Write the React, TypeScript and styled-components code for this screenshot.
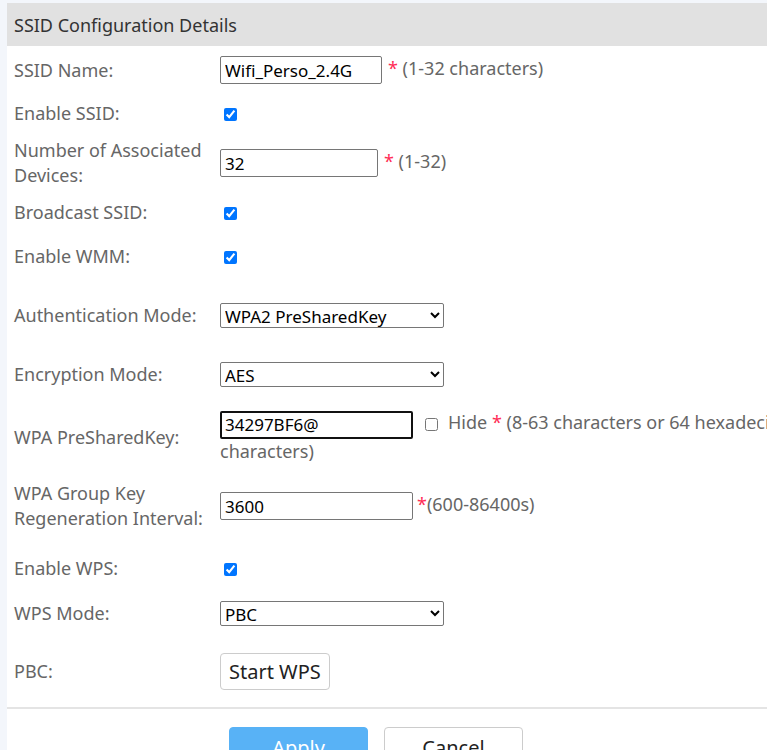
import React from 'react'
import styled, { createGlobalStyle } from 'styled-components'

const GlobalStyle = createGlobalStyle`
  html, body {
    margin: 0;
    padding: 0;
    overflow: hidden;
    background: #f3f6fb;
    font-family: "Noto Sans", "Open Sans", Arial, sans-serif;
  }
`

const Page = styled.div`
  padding: 3px 0 0 7px;
`

const Panel = styled.div`
  width: 830px;
  background: #fff;
`

const Header = styled.div`
  height: 43px;
  display: flex;
  align-items: center;
  padding-left: 7px;
  background: #e1e1e1;
  color: #333;
  font-size: 18px;
`

const Form = styled.div`
  padding-left: 7px;
`

const Row = styled.div<{ $h: number; $pt?: number }>`
  display: grid;
  grid-template-columns: 206px 1fr;
  align-items: center;
  height: ${({ $h }) => $h}px;
  padding-top: ${({ $pt }) => $pt || 0}px;
  box-sizing: border-box;
`

const Label = styled.div`
  color: #666;
  font-size: 18px;
  line-height: 25px;
`

const Value = styled.div`
  color: #666;
  font-size: 18px;
  line-height: 25px;
`

const TextInput = styled.input<{ $w: number; $focused?: boolean }>`
  box-sizing: border-box;
  width: ${({ $w }) => $w}px;
  height: 28px;
  margin: 0;
  vertical-align: middle;
  font-family: inherit;
  font-size: 17px;
  color: #000;
  border-radius: 2px;
  outline: none;
  border: ${({ $focused }) => ($focused ? '2px solid #111' : '1px solid #767676')};
  padding: 0 4px 0 ${({ $focused }) => ($focused ? 3 : 4)}px;
`

const Select = styled.select`
  box-sizing: border-box;
  width: 224px;
  height: 25px;
  margin: 0;
  vertical-align: middle;
  font-family: inherit;
  font-size: 17px;
  color: #000;
  background: #fff;
  border: 1px solid #767676;
  border-radius: 2px;
`

const Check = styled.input`
  width: 13px;
  height: 13px;
  margin: 3px 3px 3px 4px;
  vertical-align: middle;
  accent-color: #0075ff;
`

const Hint = styled.span<{ $gap?: number }>`
  margin-left: ${({ $gap }) => $gap ?? 6}px;
  color: #666;
`

const Star = styled.span`
  color: #ff2d55;
`

const HideCheck = styled(Check)`
  margin-left: 12px;
  margin-right: 10px;
`

const StartButton = styled.button`
  height: 37px;
  padding: 0 8px;
  font-family: inherit;
  font-size: 20px;
  color: #222;
  background: #fff;
  border: 1px solid #ccc;
  border-radius: 4px;
`

const Divider = styled.div`
  height: 2px;
  background: #e4e4e4;
`

const Actions = styled.div`
  display: flex;
  gap: 16px;
  padding: 18px 0 0 222px;
`

const ActionButton = styled.button<{ $primary?: boolean }>`
  width: 139px;
  height: 40px;
  font-family: inherit;
  font-size: 20px;
  border-radius: 4px;
  color: ${({ $primary }) => ($primary ? '#fff' : '#222')};
  background: ${({ $primary }) => ($primary ? '#58b2f6' : '#fff')};
  border: 1px solid ${({ $primary }) => ($primary ? '#58b2f6' : '#ccc')};
`

export default function App() {
  return (
    <Page>
      <GlobalStyle />
      <Panel>
        <Header>SSID Configuration Details</Header>
        <Form>
          <Row $h={48}>
            <Label>SSID Name:</Label>
            <Value>
              <TextInput $w={162} defaultValue="Wifi_Perso_2.4G" />
              <Hint>
                <Star>*</Star> (1-32 characters)
              </Hint>
            </Value>
          </Row>
          <Row $h={38}>
            <Label>Enable SSID:</Label>
            <Value>
              <Check type="checkbox" defaultChecked />
            </Value>
          </Row>
          <Row $h={62}>
            <Label>Number of Associated Devices:</Label>
            <Value>
              <TextInput $w={158} defaultValue="32" />
              <Hint>
                <Star>*</Star> (1-32)
              </Hint>
            </Value>
          </Row>
          <Row $h={36}>
            <Label>Broadcast SSID:</Label>
            <Value>
              <Check type="checkbox" defaultChecked />
            </Value>
          </Row>
          <Row $h={52}>
            <Label>Enable WMM:</Label>
            <Value>
              <Check type="checkbox" defaultChecked />
            </Value>
          </Row>
          <Row $h={66}>
            <Label>Authentication Mode:</Label>
            <Value>
              <Select defaultValue="wpa2">
                <option value="wpa2">WPA2 PreSharedKey</option>
              </Select>
            </Value>
          </Row>
          <Row $h={52}>
            <Label>Encryption Mode:</Label>
            <Value>
              <Select defaultValue="aes">
                <option value="aes">AES</option>
              </Select>
            </Value>
          </Row>
          <Row $h={74}>
            <Label>WPA PreSharedKey:</Label>
            <Value>
              <TextInput $w={193} $focused defaultValue="34297BF6@" />
              <HideCheck type="checkbox" />
              Hide <Star>*</Star> (8-63 characters or 64 hexadecimal characters)
            </Value>
          </Row>
          <Row $h={64}>
            <Label>WPA Group Key Regeneration Interval:</Label>
            <Value>
              <TextInput $w={193} defaultValue="3600" />
              <Hint $gap={4}>
                <Star>*</Star>(600-86400s)
              </Hint>
            </Value>
          </Row>
          <Row $h={60}>
            <Label>Enable WPS:</Label>
            <Value>
              <Check type="checkbox" defaultChecked />
            </Value>
          </Row>
          <Row $h={30}>
            <Label>WPS Mode:</Label>
            <Value>
              <Select defaultValue="pbc">
                <option value="pbc">PBC</option>
              </Select>
            </Value>
          </Row>
          <Row $h={79} $pt={7}>
            <Label>PBC:</Label>
            <Value>
              <StartButton type="button">Start WPS</StartButton>
            </Value>
          </Row>
        </Form>
        <Divider />
        <Actions>
          <ActionButton $primary type="button">
            Apply
          </ActionButton>
          <ActionButton type="button">Cancel</ActionButton>
        </Actions>
      </Panel>
    </Page>
  )
}
